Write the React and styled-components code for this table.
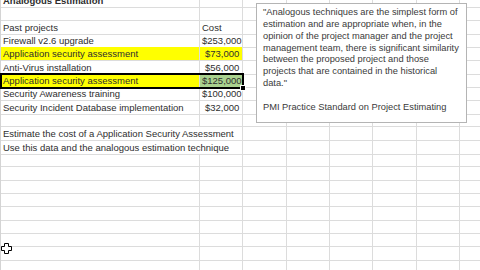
import React from "react";
import styled, { createGlobalStyle } from "styled-components";

const GlobalStyle = createGlobalStyle`
  html, body { margin: 0; padding: 0; background: #ffffff; overflow: hidden; }
  body { font-family: "Liberation Sans", Arial, sans-serif; }
`;

const Sheet = styled.div`
  position: relative;
  width: 480px;
  height: 270px;
  overflow: hidden;
  background: #fff;
`;

const Rows = styled.div`
  display: flex;
  flex-direction: column;
  margin-top: -6px;
  border-left: 1px solid #d4d4d4;
`;

const Row = styled.div`
  display: grid;
  grid-template-columns: 242.33px repeat(6, 43.33px);
  height: 13.333px;
`;

const Pair = styled.div`
  display: grid;
  grid-template-columns: 199px 43.33px;
  position: relative;
  z-index: ${(p) => (p.$selected ? 2 : 0)};
  outline: ${(p) => (p.$selected ? "2px solid #000" : "none")};
  outline-offset: -1px;
  &::after {
    content: "";
    display: ${(p) => (p.$selected ? "block" : "none")};
    position: absolute;
    right: -3px;
    bottom: -3px;
    width: 4px;
    height: 4px;
    background: #000;
    border: 1px solid #fff;
  }
`;

const Cell = styled.div`
  box-sizing: border-box;
  grid-column: ${(p) => (p.$span ? `span ${p.$span}` : "auto")};
  border-right: 1px solid #dcdcdc;
  border-bottom: 1px solid #dcdcdc;
  background: ${(p) => p.$bg || "transparent"};
  padding: 0 3px 0 2px;
  font-size: 9.5px;
  line-height: 13px;
  color: #2e2e2e;
  font-weight: ${(p) => (p.$bold ? 700 : 400)};
  text-align: ${(p) => p.$align || "left"};
  white-space: nowrap;
  overflow: visible;
`;

const Note = styled.div`
  position: absolute;
  left: 256px;
  top: 3px;
  width: 211px;
  height: 120px;
  box-sizing: border-box;
  background: #fff;
  border: 1px solid #b4b4b4;
  padding: 3px 6px;
  font-size: 9.3px;
  line-height: 11.85px;
  color: #3a3a3a;
  white-space: nowrap;
  z-index: 3;
`;

const NoteLine = styled.div`
  min-height: 11.85px;
`;

const Cursor = styled.svg`
  position: absolute;
  left: 1px;
  top: 243px;
  z-index: 4;
`;

const YELLOW = "#ffff00";
const GREEN = "#a9d18e";

const rows = [
  { a: "Analogous Estimation", bold: true },
  {},
  { a: "Past projects", b: "Cost", bLeft: true },
  { a: "Firewall v2.6 upgrade", b: "$253,000" },
  { a: "Application security assessment", b: "$73,000", bg: YELLOW, bBg: YELLOW },
  { a: "Anti-Virus installation", b: "$56,000" },
  { a: "Application security assessment", b: "$125,000", bg: YELLOW, bBg: GREEN, selected: true },
  { a: "Security Awareness training", b: "$100,000" },
  { a: "Security Incident Database implementation", b: "$32,000" },
  {},
  { a: "Estimate the cost of a Application Security Assessment", span: true },
  { a: "Use this data and the analogous estimation technique", span: true },
];

const TOTAL_ROWS = 21;

const noteLines = [
  "\"Analogous techniques are the simplest form of",
  "estimation and are appropriate when, in the",
  "opinion of the project manager and the project",
  "management team, there is significant similarity",
  "between the proposed project and those",
  "projects that are contained in the historical",
  "data.\"",
  "",
  "PMI Practice Standard on Project Estimating",
];

export default function App() {
  const allRows = [];
  for (let i = 0; i < TOTAL_ROWS; i++) allRows.push(rows[i] || {});
  return (
    <Sheet>
      <GlobalStyle />
      <Rows>
        {allRows.map((r, i) => (
          <Row key={i}>
            <Pair $selected={r.selected}>
              {r.span ? (
                <Cell $span={2}>{r.a}</Cell>
              ) : (
                <>
                  <Cell $bg={r.bg} $bold={r.bold}>{r.a || ""}</Cell>
                  <Cell $bg={r.bBg} $align={r.bLeft ? "left" : "right"}>{r.b || ""}</Cell>
                </>
              )}
            </Pair>
            {[0, 1, 2, 3, 4, 5].map((c) => (
              <Cell key={c} />
            ))}
          </Row>
        ))}
      </Rows>
      <Note>
        {noteLines.map((l, i) => (
          <NoteLine key={i}>{l}</NoteLine>
        ))}
      </Note>
      <Cursor width="11" height="11" viewBox="0 0 11 11">
        <path d="M3.5 0.5h4v3h3v4h-3v3h-4v-3h-3v-4h3z" fill="#fff" stroke="#000" strokeWidth="1" />
      </Cursor>
    </Sheet>
  );
}
